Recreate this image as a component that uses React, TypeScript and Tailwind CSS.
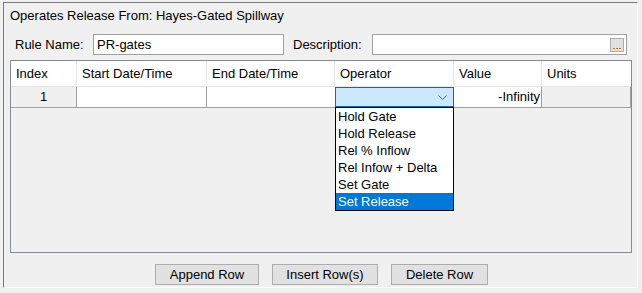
import { useState } from "react";

const columns = [
  { label: "Index", width: "w-[66px]" },
  { label: "Start Date/Time", width: "w-[130px]" },
  { label: "End Date/Time", width: "w-[128px]" },
  { label: "Operator", width: "w-[119px]" },
  { label: "Value", width: "w-[88px]" },
  { label: "Units", width: "w-[89px]" },
];

const operators = ["Hold Gate", "Hold Release", "Rel % Inflow", "Rel Infow + Delta", "Set Gate", "Set Release"];

const App = () => {
  const [selected] = useState("Set Release");

  return (
    <div className="w-[642px] h-[293px] bg-[#f0f0f0] pl-[3px] pt-[2px] text-[13px] text-black font-['Liberation_Sans',Arial,sans-serif] overflow-hidden">
      {/* Outer etched panel */}
      <div className="w-[635px] h-[286px] border-t border-l border-[#7a7a7a] border-r border-r-white border-b border-b-white flex flex-col pl-[6px] pt-[5px]">
        <div className="leading-[15px] h-[15px]">Operates Release From: Hayes-Gated Spillway</div>

        {/* Rule name / description */}
        <div className="flex items-center mt-[11px] h-[21px]">
          <span className="w-[83px] pl-[5px] leading-[15px]">Rule Name:</span>
          <div className="w-[191px] h-[21px] bg-white border border-[#a0a0a0] pl-[3px] leading-[19px]">PR-gates</div>
          <span className="w-[79px] ml-[9px] leading-[15px]">Description:</span>
          <div className="w-[255px] h-[21px] bg-white border border-[#a0a0a0] flex items-center justify-end pr-[2px]">
            <div className="w-[14px] h-[14px] bg-[#e1e1e1] border border-[#adadad] flex items-end justify-center gap-[1px] pb-[2px]">
              <span className="w-[2px] h-[1px] bg-[#c0772c]" />
              <span className="w-[2px] h-[1px] bg-[#c0772c]" />
              <span className="w-[2px] h-[1px] bg-[#c0772c]" />
            </div>
          </div>
        </div>

        {/* Table */}
        <div className="relative mt-[5px] w-[622px] h-[193px] border border-[#868a91] bg-[#f0f0f0]">
          <div className="flex h-[26px] bg-white border-b border-[#e5e5e5]">
            {columns.map((c, i) => (
              <div
                key={c.label}
                className={`${c.width} h-full pl-[5px] leading-[25px] ${i < columns.length - 1 ? "border-r border-[#e5e5e5]" : ""}`}
              >
                {c.label}
              </div>
            ))}
          </div>
          <div className="flex h-[21px] border-b border-[#a0a0a0]">
            <div className="w-[66px] h-full text-center leading-[20px] border-r border-[#a0a0a0] bg-[#f0f0f0]">1</div>
            <div className="w-[130px] h-full bg-white border-r border-[#a0a0a0]" />
            <div className="w-[128px] h-full bg-white" />
            <div className="w-[119px] h-full bg-[#cce8ff] border border-[#1f66a8] flex items-center justify-end pr-[6px]">
              <svg width="9" height="5" viewBox="0 0 9 5" fill="none">
                <path d="M0.5 0.5 L4.5 4.5 L8.5 0.5" stroke="#606060" strokeWidth="1" />
              </svg>
            </div>
            <div className="w-[88px] h-full bg-white text-right pr-[1px] leading-[20px] border-r border-[#a0a0a0]">-Infinity</div>
            <div className="w-[89px] h-full bg-[#f0f0f0] border-r border-[#a0a0a0]" />
          </div>

          {/* Operator dropdown list */}
          <div className="absolute left-[324px] top-[46px] w-[119px] bg-white border border-black">
            {operators.map((op) => (
              <div
                key={op}
                className={`h-[17px] leading-[17px] pl-[2px] ${op === selected ? "bg-[#0078d7] text-white" : ""}`}
              >
                {op}
              </div>
            ))}
          </div>
        </div>

        {/* Buttons */}
        <div className="flex mt-[11px] pl-[145px] gap-[12px]">
          <button className="w-[104px] h-[21px] bg-[#e1e1e1] border border-[#adadad] leading-[19px]">Append Row</button>
          <button className="w-[106px] h-[21px] bg-[#e1e1e1] border border-[#adadad] leading-[19px] ml-[1px]">Insert Row(s)</button>
          <button className="w-[97px] h-[21px] bg-[#e1e1e1] border border-[#adadad] leading-[19px] ml-[1px]">Delete Row</button>
        </div>
      </div>
    </div>
  );
};

export default App;
